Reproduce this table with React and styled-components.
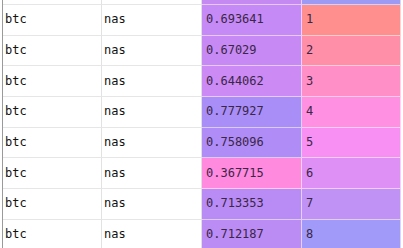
import React from 'react'
import styled, { createGlobalStyle } from 'styled-components'

const GlobalStyle = createGlobalStyle`
  html, body {
    margin: 0;
    padding: 0;
    background: #ffffff;
  }
`

const Viewport = styled.div`
  width: 403px;
  height: 248px;
  overflow: hidden;
  padding-left: 2px;
  box-sizing: border-box;
  background: #ffffff;
`

const Table = styled.div`
  display: grid;
  grid-template-columns: 99px 100px 100px 99px;
  grid-auto-rows: 30.7px;
  margin-top: -25.7px;
  border-left: 1px solid #9a9a9a;
  width: 399px;
  font-family: 'DejaVu Sans Mono', 'Liberation Mono', monospace;
  font-size: 12px;
`

const Cell = styled.div`
  display: flex;
  align-items: center;
  box-sizing: border-box;
  padding-left: ${(p) => (p.colored ? '4px' : '2px')};
  padding-bottom: 1px;
  background: ${(p) => p.bg || '#ffffff'};
  color: ${(p) => (p.colored ? '#3a2646' : '#111111')};
  border-bottom: 1px solid
    ${(p) => (p.colored ? 'rgba(255, 255, 255, 0.55)' : '#e6e6e6')};
  border-right: 1px solid
    ${(p) => (p.colored ? 'rgba(255, 255, 255, 0.6)' : '#e2e2e2')};
`

const rows = [
  { value: '', rank: '', vbg: '#c58af2', rbg: '#9c9af2' },
  { value: '0.693641', rank: '1', vbg: '#c58af5', rbg: '#ff8e8e' },
  { value: '0.67029', rank: '2', vbg: '#c78af5', rbg: '#ff8fa8' },
  { value: '0.644062', rank: '3', vbg: '#cc8af5', rbg: '#ff8fc6' },
  { value: '0.777927', rank: '4', vbg: '#a98ef8', rbg: '#ff90e2' },
  { value: '0.758096', rank: '5', vbg: '#b08cf6', rbg: '#f890f4' },
  { value: '0.367715', rank: '6', vbg: '#ff8ade', rbg: '#de90f4' },
  { value: '0.713353', rank: '7', vbg: '#b98cf5', rbg: '#c092f5' },
  { value: '0.712187', rank: '8', vbg: '#bc8cf5', rbg: '#a29af8' },
  { value: '', rank: '', vbg: '#dc8cf0', rbg: '#b494f5' },
]

const App = () => (
  <>
    <GlobalStyle />
    <Viewport>
      <Table>
        {rows.map((row, i) => (
          <React.Fragment key={i}>
            <Cell>{row.value ? 'btc' : ''}</Cell>
            <Cell>{row.value ? 'nas' : ''}</Cell>
            <Cell colored bg={row.vbg}>
              {row.value}
            </Cell>
            <Cell colored bg={row.rbg}>
              {row.rank}
            </Cell>
          </React.Fragment>
        ))}
      </Table>
    </Viewport>
  </>
)

export default App
